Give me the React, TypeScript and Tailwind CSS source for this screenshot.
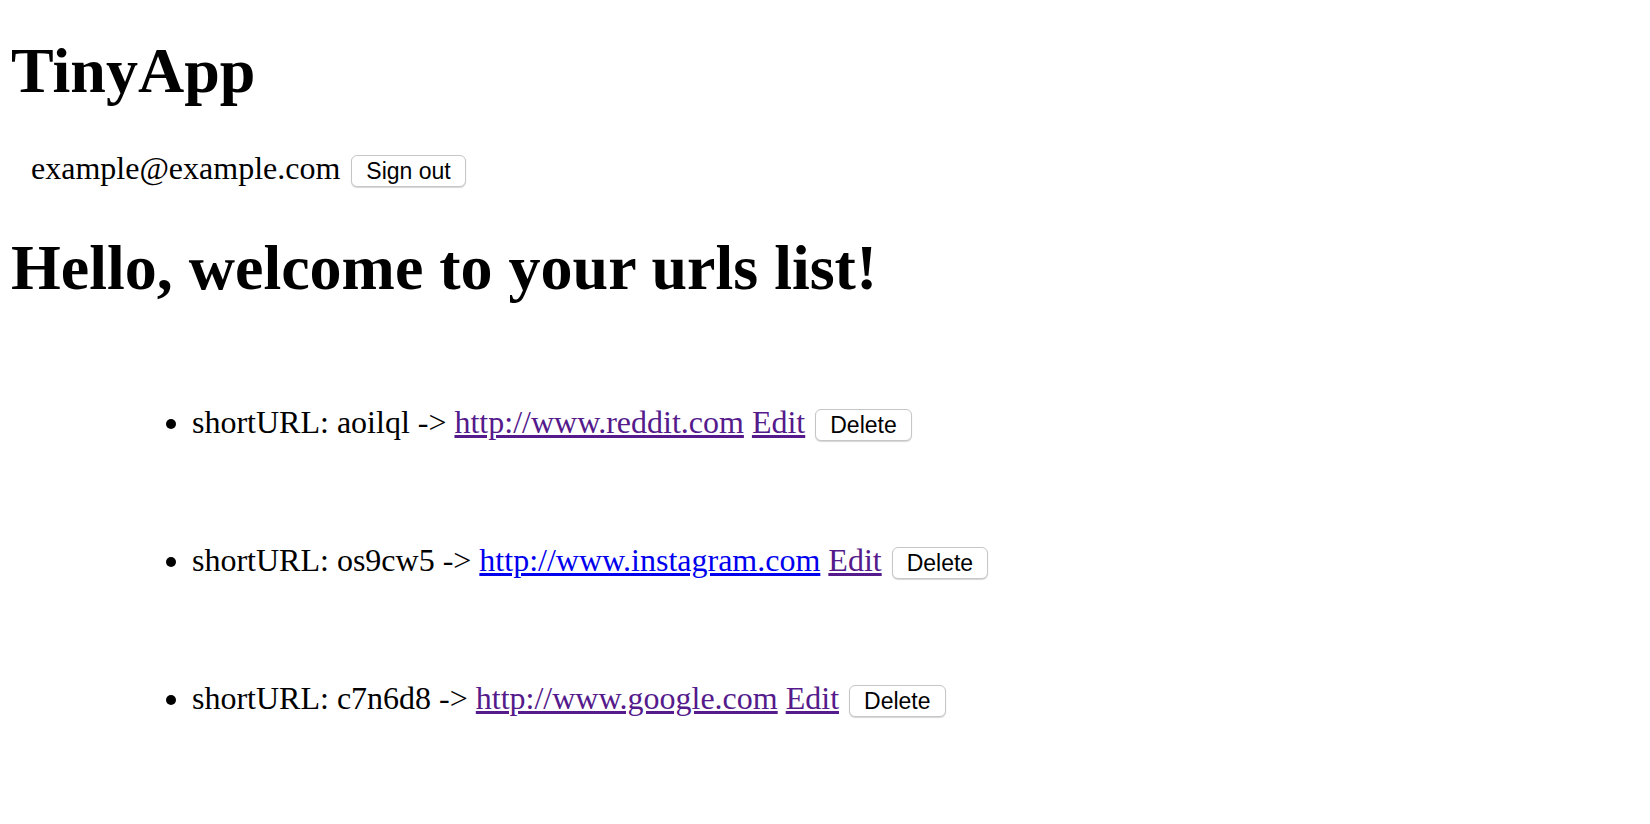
const URLS = [
  { short: "aoilql", long: "http://www.reddit.com", visited: true },
  { short: "os9cw5", long: "http://www.instagram.com", visited: false },
  { short: "c7n6d8", long: "http://www.google.com", visited: true },
];

function MacButton({ label }: { label: string }) {
  return (
    <button
      type="button"
      className="inline-block h-[32px] px-[14px] text-[23px] leading-[26px] text-black bg-white border border-[#c6c6c6] rounded-[6px] shadow-[0_1px_1px_rgba(0,0,0,0.16)] align-baseline"
      style={{ fontFamily: "'Liberation Sans', Arial, sans-serif" }}
    >
      {label}
    </button>
  );
}

export default function App() {
  return (
    <div className="min-h-screen bg-white text-black px-[11px] font-['Liberation_Serif',serif]">
      {/* Title */}
      <h1 className="pt-[35px] text-[64px] leading-[72px] font-bold">TinyApp</h1>

      {/* Signed-in user */}
      <div className="mt-[45px] pl-[20px] flex items-baseline gap-[11px]">
        <span className="text-[32px] leading-[33px]">example@example.com</span>
        <MacButton label="Sign out" />
      </div>

      <h1 className="mt-[45px] text-[64px] leading-[72px] font-bold">Hello, welcome to your urls list!</h1>

      {/* URL list */}
      <ul className="list-disc pl-[181px] mt-[100px] flex flex-col gap-[101px]">
        {URLS.map(u => (
          <li key={u.short} className="text-[32px] leading-[36px]">
            shortURL: {u.short} -&gt;{" "}
            <a href="#" className={`underline ${u.visited ? "text-[#551a8b]" : "text-[#0000ee]"}`}>{u.long}</a>{" "}
            <a href="#" className="underline text-[#551a8b]">Edit</a>{" "}
            <span className="ml-[2px]"><MacButton label="Delete" /></span>
          </li>
        ))}
      </ul>
    </div>
  );
}
